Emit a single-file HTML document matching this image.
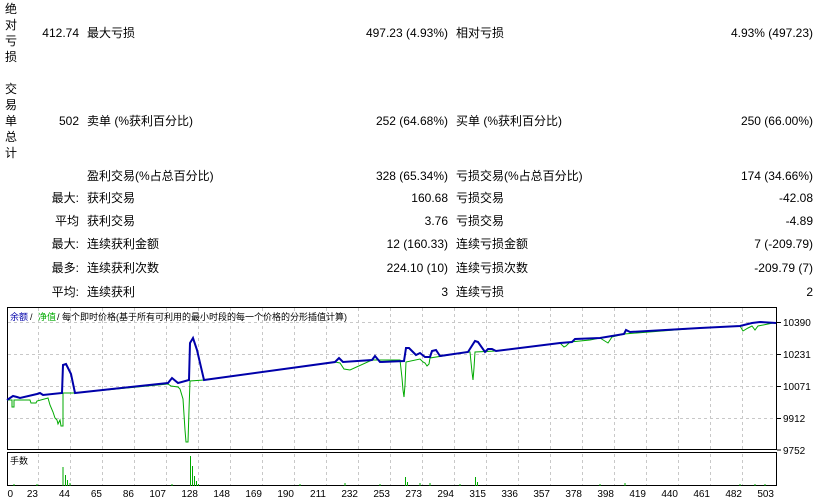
<!DOCTYPE html>
<html><head><meta charset="utf-8"><style>
body{margin:0;width:827px;height:501px;background:#fff;position:relative;overflow:hidden;font-family:"Liberation Sans","Noto Sans CJK SC",sans-serif;font-size:12px;color:#000}
.t{position:absolute;white-space:nowrap;line-height:14px}
.r{text-align:right}
.v{position:absolute;left:5px;width:12px;line-height:16px;text-align:center}
</style></head><body>
<div class="v" style="top:1px">绝<br>对<br>亏<br>损</div>
<div class="v" style="top:81px">交<br>易<br>单<br>总<br>计</div>

<div class="t r" style="right:748px;top:26px">412.74</div><div class="t" style="left:87px;top:26px">最大亏损</div>
<div class="t r" style="right:379px;top:26px">497.23 (4.93%)</div><div class="t" style="left:456px;top:26px">相对亏损</div>
<div class="t r" style="right:14px;top:26px">4.93% (497.23)</div>

<div class="t r" style="right:748px;top:114px">502</div><div class="t" style="left:87px;top:114px">卖单 (%获利百分比)</div>
<div class="t r" style="right:379px;top:114px">252 (64.68%)</div><div class="t" style="left:456px;top:114px">买单 (%获利百分比)</div>
<div class="t r" style="right:14px;top:114px">250 (66.00%)</div>

<div class="t" style="left:87px;top:169px">盈利交易(%占总百分比)</div>
<div class="t r" style="right:379px;top:169px">328 (65.34%)</div><div class="t" style="left:456px;top:169px">亏损交易(%占总百分比)</div>
<div class="t r" style="right:14px;top:169px">174 (34.66%)</div>

<div class="t r" style="right:748px;top:191px">最大:</div><div class="t" style="left:87px;top:191px">获利交易</div>
<div class="t r" style="right:379px;top:191px">160.68</div><div class="t" style="left:456px;top:191px">亏损交易</div>
<div class="t r" style="right:14px;top:191px">-42.08</div>

<div class="t r" style="right:748px;top:214px">平均</div><div class="t" style="left:87px;top:214px">获利交易</div>
<div class="t r" style="right:379px;top:214px">3.76</div><div class="t" style="left:456px;top:214px">亏损交易</div>
<div class="t r" style="right:14px;top:214px">-4.89</div>

<div class="t r" style="right:748px;top:237px">最大:</div><div class="t" style="left:87px;top:237px">连续获利金额</div>
<div class="t r" style="right:379px;top:237px">12 (160.33)</div><div class="t" style="left:456px;top:237px">连续亏损金额</div>
<div class="t r" style="right:14px;top:237px">7 (-209.79)</div>

<div class="t r" style="right:748px;top:261px">最多:</div><div class="t" style="left:87px;top:261px">连续获利次数</div>
<div class="t r" style="right:379px;top:261px">224.10 (10)</div><div class="t" style="left:456px;top:261px">连续亏损次数</div>
<div class="t r" style="right:14px;top:261px">-209.79 (7)</div>

<div class="t r" style="right:748px;top:285px">平均:</div><div class="t" style="left:87px;top:285px">连续获利</div>
<div class="t r" style="right:379px;top:285px">3</div><div class="t" style="left:456px;top:285px">连续亏损</div>
<div class="t r" style="right:14px;top:285px">2</div>

<svg style="position:absolute;left:0;top:300px" width="827" height="201" viewBox="0 300 827 201">
<g stroke="#c8c8c8" stroke-dasharray="3,3" stroke-width="1" fill="none">
<path d="M38.5 308V450M70.5 308V450M102.5 308V450M134.5 308V450M166.5 308V450M198.5 308V450M230.5 308V450M262.5 308V450M294.5 308V450M326.5 308V450M358.5 308V450M390.5 308V450M422.5 308V450M454.5 308V450M486.5 308V450M518.5 308V450M550.5 308V450M582.5 308V450M614.5 308V450M646.5 308V450M678.5 308V450M710.5 308V450M742.5 308V450"/>
<path d="M38.5 454V486M70.5 454V486M102.5 454V486M134.5 454V486M166.5 454V486M198.5 454V486M230.5 454V486M262.5 454V486M294.5 454V486M326.5 454V486M358.5 454V486M390.5 454V486M422.5 454V486M454.5 454V486M486.5 454V486M518.5 454V486M550.5 454V486M582.5 454V486M614.5 454V486M646.5 454V486M678.5 454V486M710.5 454V486M742.5 454V486"/>
<path d="M8 322.5H777M8 354.5H777M8 386.5H777M8 418.5H777"/>
</g>
<rect x="7.5" y="307.5" width="769" height="142" fill="none" stroke="#000" stroke-width="1"/>
<rect x="7.5" y="452.5" width="769" height="33" fill="none" stroke="#000" stroke-width="1"/>
<g stroke="#000"><path d="M777 322.5h4M777 354.5h4M777 386.5h4M777 418.5h4M777 450h4"/></g>
<polyline fill="none" stroke="#00aa00" stroke-width="1" points="7,400 12,400 12,407 14,407 14,400 30,400 31,403 36,403 37,401 48,398 50,405 53,412 55,418 57,420 58,424 60,420 61,426 63,426 63,393 75,393 168,384 171,386 178,387 180,389 183,399 185,430 186,442 188,442 189,410 190,381 204,380 335,362 340,363 344,369 350,370 372,360 400,360 402,378 403,390 404,397 405,385 406,362 420,359 423,362 425,363 427,366 429,364 430,358 468,352 470,352 471,362 472,372 473,380 474,368 475,352 496,351 560,343 564,347 566,346 570,342 590,340 600,338 608,343 612,337 624,334 700,328 740,326 743,331 748,328 752,326 755,330 758,326 773,323"/>
<polyline fill="none" stroke="#0000aa" stroke-width="2" points="7,400 13,396 17,397 20,398 37,394 40,393 43,395 62,393 63,365 66,364 71,374 75,393 168,383 172,378 178,383 189,380 190,343 193,338 197,350 204,380 335,362 339,358 343,362 372,360 375,356 380,362 404,361 406,348 409,348 416,355 420,353 425,357 430,357 432,351 436,350 440,356 468,352 475,341 478,342 485,352 488,349 492,349 496,351 560,343 572,342 575,339 600,338 624,334 626,330 630,332 700,328 740,326 752,323 760,322 776,323"/>
<g stroke="#00aa00" stroke-width="1">
<path d="M63 486V467M65.5 486V475M67.5 486V480M70 486V483M14 486V484M190.5 486V456M192.5 486V466M194.5 486V476M196.5 486V481M198.5 486V484M37 486V484M405.5 486V477M407.5 486V482M475.5 486V477M477.5 486V482M172 486V484M300 486V484M345 486V483M380 486V484M420 486V483M430 486V483M460 486V484M600 486V484M625 486V483M740 486V484M755 486V484M765 486V484"/>
</g>
<text x="10" y="320" font-size="9" fill="#0000aa">余额</text>
<text x="30" y="320" font-size="9" fill="#000">/</text>
<text x="38" y="320" font-size="9" fill="#00aa00">净值</text>
<text x="57" y="320" font-size="9" fill="#000">/ 每个即时价格(基于所有可利用的最小时段的每一个价格的分形插值计算)</text>
<text x="10" y="464" font-size="9">手数</text>
<g font-size="10" fill="#000">
<text x="783" y="326">10390</text><text x="783" y="358">10231</text><text x="783" y="390">10071</text><text x="783" y="422">9912</text><text x="783" y="454">9752</text>
</g>
<g font-size="10" text-anchor="end">
<text x="13" y="497">0</text><text x="38" y="497">23</text><text x="70" y="497">44</text><text x="102" y="497">65</text><text x="134" y="497">86</text><text x="166" y="497">107</text><text x="198" y="497">128</text><text x="230" y="497">148</text><text x="262" y="497">169</text><text x="294" y="497">190</text><text x="326" y="497">211</text><text x="358" y="497">232</text><text x="390" y="497">253</text><text x="422" y="497">273</text><text x="454" y="497">294</text><text x="486" y="497">315</text><text x="518" y="497">336</text><text x="550" y="497">357</text><text x="582" y="497">378</text><text x="614" y="497">398</text><text x="646" y="497">419</text><text x="678" y="497">440</text><text x="710" y="497">461</text><text x="742" y="497">482</text><text x="774" y="497">503</text>
</g>
</svg>
</body></html>
